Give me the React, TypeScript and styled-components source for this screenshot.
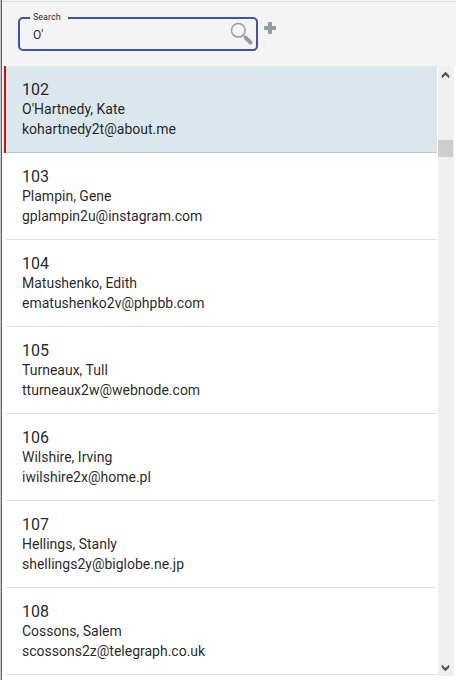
import React from 'react';
import styled, { createGlobalStyle } from 'styled-components';

const GlobalStyle = createGlobalStyle`
  * { box-sizing: border-box; }
  html, body, #root { height: 100%; }
  body { margin: 0; overflow: hidden; background: #fff; font-family: Roboto, sans-serif; color: rgba(0, 0, 0, 0.87); }
`;

const Window = styled.div`
  height: 680px;
  width: 456px;
  display: flex;
  border-left: 1px solid #c8c8c8;
  overflow: hidden;
`;

const Pane = styled.main`
  flex: 1;
  display: flex;
  flex-direction: column;
  min-width: 0;
  border-left: 1px solid #2a6da5;
`;

const Toolbar = styled.header`
  flex: none;
  height: 66px;
  display: flex;
  align-items: flex-start;
  padding: 11px 0 0 16px;
  background: #f4f4f4;
  border-top: 1px solid #f4f4f4;
  box-shadow: inset 0 1px 0 #dcdfdf;
`;

const SearchField = styled.fieldset`
  display: flex;
  justify-content: space-between;
  width: 240px;
  height: 39px;
  margin: 0;
  padding: 0 3px 0 13px;
  border: 2px solid #3f51b5;
  border-radius: 5px;
  min-width: 0;
`;

const SearchLabel = styled.legend`
  width: 38px;
  height: 12px;
  margin-left: -3px;
  padding: 0 0 0 3px;
  font-size: 9px;
  line-height: 10px;
  white-space: nowrap;
`;

const SearchInput = styled.input`
  width: 180px;
  height: 15px;
  margin-top: 4px;
  padding: 0;
  border: 0;
  outline: 0;
  background: transparent;
  color: inherit;
  font: 12px/15px Roboto, sans-serif;
`;

const SearchIcon = styled.svg`
  flex: none;
  width: 24px;
  height: 24px;
  margin-top: -2px;
`;

const AddIcon = styled.svg`
  width: 12px;
  height: 12px;
  margin: 10px 0 0 6px;
`;

const Content = styled.div`
  flex: none;
  display: flex;
  height: 610px;
  padding-left: 2px;
`;

const List = styled.ul`
  width: 433px;
  margin: 0;
  padding: 0;
  list-style: none;
`;

const Person = styled.li<{ $selected?: boolean }>`
  display: flex;
  height: 87px;
  border-left: 2px solid ${({ $selected }) => ($selected ? '#f00' : '#fff')};
`;

const PersonBody = styled.div<{ $selected?: boolean }>`
  flex: 1;
  padding: 14px 16px 0;
  background: ${({ $selected }) => ($selected ? '#dae8ed' : '#fff')};
  border-bottom: 1px solid ${({ $selected }) => ($selected ? '#b9c7cc' : '#e0e0e0')};
`;

const PersonId = styled.div`
  height: 19px;
  font-size: 16px;
  line-height: 20px;
`;

const PersonLine = styled.div`
  font-size: 14px;
  line-height: 20px;
`;

const Scrollbar = styled.div`
  width: 16px;
  margin-left: 1px;
  display: flex;
  flex-direction: column;
  justify-content: space-between;
  background: #f0f0f0;
`;

const Arrow = styled.svg`
  display: block;
  width: 16px;
  height: 17px;
`;

const Thumb = styled.div`
  width: 15px;
  height: 17px;
  margin: 57px 0 auto;
  background: #cdcdcd;
`;

const people = [
  { id: 102, name: "O'Hartnedy, Kate", email: 'kohartnedy2t@about.me' },
  { id: 103, name: 'Plampin, Gene', email: 'gplampin2u@instagram.com' },
  { id: 104, name: 'Matushenko, Edith', email: 'ematushenko2v@phpbb.com' },
  { id: 105, name: 'Turneaux, Tull', email: 'tturneaux2w@webnode.com' },
  { id: 106, name: 'Wilshire, Irving', email: 'iwilshire2x@home.pl' },
  { id: 107, name: 'Hellings, Stanly', email: 'shellings2y@biglobe.ne.jp' },
  { id: 108, name: 'Cossons, Salem', email: 'scossons2z@telegraph.co.uk' },
];

export default function App() {
  return (
    <>
      <GlobalStyle />
      <Window>
        <Pane>
          <Toolbar>
            <SearchField>
              <SearchLabel>Search</SearchLabel>
              <SearchInput aria-label="Search" defaultValue="O'" />
              <SearchIcon viewBox="0 0 24 24" fill="none" stroke="#999">
                <circle cx="9.3" cy="8.3" r="6.8" strokeWidth="1.5" />
                <path d="M14.2 13.2l2 2" strokeWidth="1.5" />
                <path d="M16.8 15.8l4.7 4.7" strokeWidth="4" strokeLinecap="round" />
              </SearchIcon>
            </SearchField>
            <AddIcon viewBox="0 0 12 12">
              <path
                d="M5 0h2q1 0 1 1v3h3q1 0 1 1v2q0 1-1 1H8v3q0 1-1 1H5q-1 0-1-1V8H1Q0 8 0 7V5q0-1 1-1h3V1q0-1 1-1z"
                fill="#959ba1"
              />
            </AddIcon>
          </Toolbar>
          <Content>
            <List>
              {people.map((p) => (
                <Person key={p.id} $selected={p.id === 102}>
                  <PersonBody $selected={p.id === 102}>
                    <PersonId>{p.id}</PersonId>
                    <PersonLine>{p.name}</PersonLine>
                    <PersonLine>{p.email}</PersonLine>
                  </PersonBody>
                </Person>
              ))}
            </List>
            <Scrollbar>
              <Arrow viewBox="0 0 16 17">
                <path d="M4 9.5L7.5 6 11 9.5V12L7.5 8.8 4 12z" fill="#505050" stroke="#505050" strokeWidth="0.5" />
              </Arrow>
              <Thumb />
              <Arrow viewBox="0 0 16 17">
                <path d="M4 8.5L7.5 12 11 8.5V6L7.5 9.2 4 6z" fill="#505050" stroke="#505050" strokeWidth="0.5" />
              </Arrow>
            </Scrollbar>
          </Content>
        </Pane>
      </Window>
    </>
  );
}
